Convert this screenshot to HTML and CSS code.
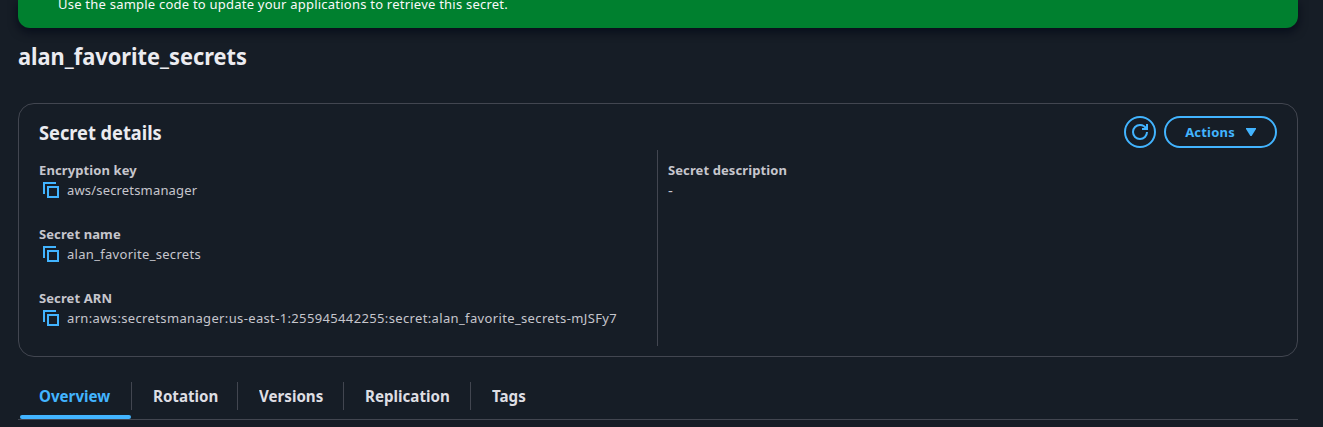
FILE: index.html
```html
<!DOCTYPE html>
<html lang="en">
<head>
<meta charset="utf-8">
<title>alan_favorite_secrets</title>
<link rel="stylesheet" href="styles.css">
</head>
<body>
<svg class="defs" aria-hidden="true">
  <symbol id="copy" viewBox="0 0 16 16"><path d="M1 12V1h12M5 5h10v10H5z" fill="none" stroke="currentColor" stroke-width="2"/></symbol>
</svg>
<main class="page">
  <div class="flash"><span class="flash-text">Use the sample code to update your applications to retrieve this secret.</span></div>
  <h1 class="title"><span>alan_favorite_secrets</span></h1>
  <section class="card">
    <header class="card-header">
      <h2 class="card-title"><span>Secret details</span></h2>
      <button class="btn btn-round" aria-label="Refresh"><svg width="16" height="16" viewBox="0 0 16 16"><path d="M10 5h5V0M15 8c0 3.87-3.13 7-7 7s-7-3.13-7-7 3.13-7 7-7c2.79 0 5.2 1.63 6.33 4" fill="none" stroke="currentColor" stroke-width="2"/></svg></button>
      <button class="btn btn-actions"><span>Actions</span><svg width="10" height="8" viewBox="0 0 10 8"><path d="M0 0h10v1L5.6 8H4.4L0 1z" fill="currentColor"/></svg></button>
    </header>
    <div class="columns">
      <div class="column">
        <div class="field"><div class="label"><span>Encryption key</span></div><div class="value value-key"><svg class="copy"><use href="#copy"/></svg><span>aws/secretsmanager</span></div></div>
        <div class="field"><div class="label"><span>Secret name</span></div><div class="value"><svg class="copy"><use href="#copy"/></svg><span>alan_favorite_secrets</span></div></div>
        <div class="field"><div class="label"><span>Secret ARN</span></div><div class="value value-arn"><svg class="copy"><use href="#copy"/></svg><span>arn:aws:secretsmanager:us-east-1:255945442255:secret:alan_favorite_secrets-mJSFy7</span></div></div>
      </div>
      <div class="column column-right">
        <div class="field"><div class="label"><span>Secret description</span></div><div class="value value-empty"><span>-</span></div></div>
      </div>
    </div>
  </section>
  <nav class="tabs">
    <a class="tab tab-active"><span>Overview</span></a>
    <a class="tab"><span>Rotation</span></a>
    <a class="tab"><span>Versions</span></a>
    <a class="tab tab-wide"><span>Replication</span></a>
    <a class="tab"><span>Tags</span></a>
  </nav>
</main>
</body>
</html>
```
FILE: styles.css
```css
* { box-sizing: border-box; }
body {
  margin: 0;
  height: 427px;
  overflow: hidden;
  background: #161d26;
  color: #c6c6cd;
  font: 13px/20px "Noto Sans", "Open Sans", sans-serif;
}
.defs { display: none; }
.page { width: 1280px; margin-left: 18px; }
.flash {
  height: 28px;
  padding: 0 40px;
  border-radius: 0 0 12px 12px;
  background: #00802f;
  color: #f9f9fa;
  line-height: 8px;
  letter-spacing: .225px;
  box-shadow: 0 4px 8px 1px rgba(0, 7, 22, .6);
}
.title { margin: 0; height: 75px; padding-top: 13px; font-size: 23px; line-height: 30px; color: #ebebf0; }
.title span, .card-title span, .tab span { display: inline-block; transform-origin: 0 50%; }
.title span { transform: scaleX(.948); }
.card { height: 254px; border: 1px solid #424650; border-radius: 16px; padding: 12px 20px 10px; }
.card-header { display: flex; align-items: center; gap: 8px; height: 32px; }
.card-title { flex: 1; margin: 0; padding-top: 2px; font-size: 20px; line-height: 24px; color: #ebebf0; }
.card-title span { transform: scaleX(.91); }
.btn {
  display: flex;
  align-items: center;
  justify-content: center;
  height: 32px;
  padding: 0;
  border: 2px solid #42b4ff;
  border-radius: 16px;
  background: transparent;
  color: #42b4ff;
  font: bold 13px/20px "Noto Sans", sans-serif;
  letter-spacing: .2px;
}
.btn-round { width: 32px; }
.btn-actions { width: 113px; gap: 11px; }
.columns { display: flex; margin-top: 2px; height: 196px; }
.column { width: 618px; padding-top: 10px; display: flex; flex-direction: column; gap: 24px; }
.column-right { width: 620px; border-left: 1px solid #424650; padding-left: 10px; }
.label { font-weight: bold; letter-spacing: .1px; }
.value { display: flex; align-items: center; letter-spacing: .3px; }
.value-key { letter-spacing: .17px; }
.value-arn { letter-spacing: .355px; }
.value-empty { font-size: 15px; }
.copy { width: 16px; height: 16px; margin: 0 8px 0 4px; color: #42b4ff; }
.tabs { display: flex; align-items: flex-start; height: 63px; padding-left: 2px; border-bottom: 1px solid #424650; }
.tab { position: relative; width: 106px; height: 62px; padding: 29px 0 0 21px; font-size: 16px; font-weight: bold; line-height: 20px; color: #dedee3; }
.tab span { transform: scaleX(.945); }
.tab::after { content: ""; position: absolute; right: 0; top: 25px; width: 1px; height: 28px; background: #424650; }
.tab:last-child::after { display: none; }
.tab-wide { width: 127px; }
.tab-active { width: 112px; padding-left: 19px; color: #42b4ff; }
.tab-active::before { content: ""; position: absolute; left: 0; right: 1px; bottom: 0; height: 4px; border-radius: 2px; background: #42b4ff; }
```
